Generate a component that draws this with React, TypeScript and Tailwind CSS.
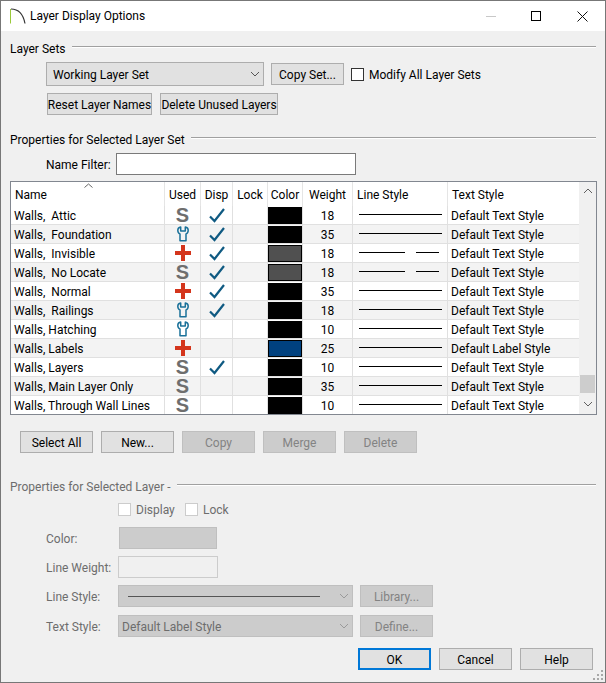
import React from 'react';

type Used = 'S' | 'W' | 'P';

interface LayerRow {
  name: string;
  used: Used;
  disp: boolean;
  color: 'black' | 'gray' | 'blue';
  weight: number;
  dashed?: boolean;
  textStyle?: string;
}

const rows: LayerRow[] = [
  { name: 'Walls,  Attic', used: 'S', disp: true, color: 'black', weight: 18 },
  { name: 'Walls,  Foundation', used: 'W', disp: true, color: 'black', weight: 35 },
  { name: 'Walls,  Invisible', used: 'P', disp: true, color: 'gray', weight: 18, dashed: true },
  { name: 'Walls,  No Locate', used: 'S', disp: true, color: 'gray', weight: 18, dashed: true },
  { name: 'Walls,  Normal', used: 'P', disp: true, color: 'black', weight: 35 },
  { name: 'Walls,  Railings', used: 'W', disp: true, color: 'black', weight: 18 },
  { name: 'Walls, Hatching', used: 'W', disp: false, color: 'black', weight: 10 },
  { name: 'Walls, Labels', used: 'P', disp: false, color: 'blue', weight: 25, textStyle: 'Default Label Style' },
  { name: 'Walls, Layers', used: 'S', disp: true, color: 'black', weight: 10 },
  { name: 'Walls, Main Layer Only', used: 'S', disp: false, color: 'black', weight: 35 },
  { name: 'Walls, Through Wall Lines', used: 'S', disp: false, color: 'black', weight: 10 },
];

const gridCols = 'grid grid-cols-[154px_36px_32px_35px_35px_50px_95px_131px]';

function Chevron({ dir = 'down', color = '#555' }: { dir?: 'down' | 'up'; color?: string }) {
  return (
    <svg width="10" height="6" viewBox="0 0 10 6" fill="none">
      <path d={dir === 'down' ? 'M1 1l4 4 4-4' : 'M1 5l4-4 4 4'} stroke={color} strokeWidth="1" />
    </svg>
  );
}

function GroupTitle({ label, disabled, className = '' }: { label: string; disabled?: boolean; className?: string }) {
  return (
    <div className={`flex items-center gap-[6px] h-[16px] ${className}`}>
      <span className={disabled ? 'text-[#6d6d6d]' : ''}>{label}</span>
      <div className="flex-1 h-[2px] -mt-[4px] border-t border-t-[#a0a0a0] border-b border-b-white" />
    </div>
  );
}

function Btn({ label, w, disabled, primary }: { label: string; w: string; disabled?: boolean; primary?: boolean }) {
  let cls = 'border border-[#adadad] bg-[#e1e1e1] text-black';
  if (disabled) cls = 'border border-[#bfbfbf] bg-[#cccccc] text-[#838383]';
  if (primary) cls = 'border-2 border-[#0078d7] bg-[#e1e1e1] text-black';
  return (
    <button className={`${w} h-[22px] pt-[2px] flex items-center justify-center whitespace-nowrap ${cls}`}>
      {label}
    </button>
  );
}

function Checkbox({ disabled }: { disabled?: boolean }) {
  return (
    <span className={`w-[13px] h-[13px] border bg-white ${disabled ? 'border-[#cccccc]' : 'border-[#333333]'}`} />
  );
}

function UsedIcon({ kind }: { kind: Used }) {
  if (kind === 'S') {
    return (
      <span className="text-[20px] font-bold leading-[18px] text-[#6e6e6e] font-['Liberation_Sans',sans-serif]">S</span>
    );
  }
  if (kind === 'P') {
    return (
      <svg width="16" height="16" viewBox="0 0 16 16">
        <path d="M6 0h4v6h6v4h-6v6h-4v-6h-6v-4h6z" fill="#d4351c" />
      </svg>
    );
  }
  return (
    <svg width="12" height="16" viewBox="0 0 12 16" fill="none">
      <path
        d="M3.700 1C1.800 1.300 .8 2.400 .8 4.300 .8 6.300 1.500 7.500 3 8V14.800H9V8C10.500 7.500 11.200 6.300 11.200 4.300 11.200 2.400 10.200 1.300 8.300 1V5H3.700Z"
        stroke="#1a7199"
        strokeWidth="1.500"
        strokeLinejoin="round"
      />
    </svg>
  );
}

function Check() {
  return (
    <svg width="16" height="15" viewBox="0 0 16 15" fill="none">
      <path d="M1 8.500l4.500 4.500L15 1" stroke="#0f5a82" strokeWidth="2.200" />
    </svg>
  );
}

function Swatch({ color }: { color: LayerRow['color'] }) {
  const cls =
    color === 'black'
      ? 'bg-black'
      : color === 'gray'
        ? 'bg-[#505050] border border-black'
        : 'bg-[#00417f] border border-black';
  return <div className={`w-[34px] h-[17px] ${cls}`} />;
}

function LineSample({ dashed }: { dashed?: boolean }) {
  if (dashed) {
    return (
      <div className="flex gap-[11px] ml-[6px] -mt-px">
        <div className="w-[46px] h-px bg-black" />
        <div className="w-[23px] h-px bg-black" />
      </div>
    );
  }
  return <div className="w-[83px] h-px bg-black ml-[6px] -mt-px" />;
}

const cell = 'border-r border-r-[#e0e0e0] flex items-center h-[18px]';

function Row({ row, index }: { row: LayerRow; index: number }) {
  return (
    <div className={`${gridCols} h-[19px] border-b border-b-[#e0e0e0] ${index % 2 ? 'bg-[#f3f3f3]' : 'bg-white'}`}>
      <div className={`${cell} pl-[3px] pt-[2px] whitespace-pre`}>{row.name}</div>
      <div className={`${cell} justify-center`}>
        <UsedIcon kind={row.used} />
      </div>
      <div className={`${cell} justify-center`}>{row.disp && <Check />}</div>
      <div className={cell} />
      <div className={cell}>
        <Swatch color={row.color} />
      </div>
      <div className={`${cell} pt-[2px] justify-center`}>{row.weight}</div>
      <div className={cell}>
        <LineSample dashed={row.dashed} />
      </div>
      <div className="flex items-center h-[18px] pl-[3px] pt-[2px]">{row.textStyle ?? 'Default Text Style'}</div>
    </div>
  );
}

export default function App() {
  return (
    <div className="w-[606px] h-[683px] relative border border-[#777777] bg-[#f0f0f0] text-[12px] leading-[16px] text-black font-['Roboto',sans-serif] overflow-hidden">
      {/* title bar */}
      <div className="h-[30px] bg-white flex items-center">
        <svg className="ml-[9px]" width="16" height="16" viewBox="0 0 16 16" fill="none">
          <path d="M1 1C7 1 13 5 15 15.500" stroke="#333" strokeWidth="1.200" />
          <path d="M.5 1V15.500" stroke="#9ac93a" strokeWidth="1" />
        </svg>
        <span className="ml-[4px]">Layer Display Options</span>
        <div className="ml-auto flex items-center mr-[17px]">
          <div className="w-[10px] h-px bg-[#c8c8c8] mr-[35px]" />
          <div className="w-[10px] h-[10px] border border-black mr-[36px]" />
          <svg width="11" height="11" viewBox="0 0 11 11" fill="none">
            <path d="M.5.5l10 10M10.500.5l-10 10" stroke="#111" strokeWidth="1" />
          </svg>
        </div>
      </div>

      <div className="pl-[9px] pr-[9px]">
        <GroupTitle label="Layer Sets" className="mt-[10px]" />

        <div className="flex items-center mt-[5px] ml-[36px] h-[24px]">
          <div className="w-[218px] h-[24px] border border-[#adadad] bg-[#e1e1e1] flex items-center justify-between pl-[6px] pr-[3px]">
            <span className="pt-[2px]">Working Layer Set</span>
            <Chevron />
          </div>
          <div className="ml-[7px]">
            <Btn label="Copy Set..." w="w-[73px]" />
          </div>
          <div className="ml-[7px] flex items-center gap-[5px]">
            <Checkbox />
            <span className="pt-[2px]">Modify All Layer Sets</span>
          </div>
        </div>

        <div className="flex gap-[8px] mt-[7px] ml-[37px]">
          <Btn label="Reset Layer Names" w="w-[105px]" />
          <Btn label="Delete Unused Layers" w="w-[118px]" />
        </div>

        <GroupTitle label="Properties for Selected Layer Set" className="mt-[17px]" />

        <div className="flex items-center mt-[5px] ml-[36px] h-[22px]">
          <span className="w-[70px] pt-[2px]">Name Filter:</span>
          <div className="w-[240px] h-[22px] border border-[#7a7a7a] bg-white" />
        </div>

        {/* layer table */}
        <div className="mt-[6px] w-[587px] h-[234px] border border-[#828790] bg-white flex overflow-hidden">
          <div className="w-[568px]">
            <div className={`${gridCols} h-[24px] relative`}>
              <svg className="absolute left-[73px] top-[1px]" width="9" height="5" viewBox="0 0 9 5" fill="none">
                <path d="M.5 4.500l4-3.500 4 3.500" stroke="#666" />
              </svg>
              {['Name', 'Used', 'Disp', 'Lock', 'Color', 'Weight', 'Line Style', 'Text Style'].map((h, i) => (
                <div
                  key={h}
                  className={`flex items-end pb-[3px] ${i < 7 ? 'border-r border-r-[#e5e5e5]' : ''} ${
                    i === 0 || i >= 6 ? 'pl-[4px]' : 'justify-center'
                  }`}
                >
                  {h}
                </div>
              ))}
            </div>
            {rows.map((row, i) => (
              <Row key={row.name} row={row} index={i} />
            ))}
          </div>
          {/* scrollbar */}
          <div className="flex-1 bg-[#f0f0f0] flex flex-col items-center relative">
            <div className="h-[17px] flex items-center justify-center pt-px">
              <Chevron dir="up" color="#606060" />
            </div>
            <div className="w-[15px] h-[18px] bg-[#cdcdcd] mt-[176px]" />
            <div className="flex-1 flex items-center justify-center">
              <Chevron color="#606060" />
            </div>
          </div>
        </div>

        <div className="flex gap-[8px] mt-[16px] ml-[10px]">
          <Btn label="Select All" w="w-[73px]" />
          <Btn label="New..." w="w-[73px]" />
          <Btn label="Copy" w="w-[73px]" disabled />
          <Btn label="Merge" w="w-[73px]" disabled />
          <Btn label="Delete" w="w-[73px]" disabled />
        </div>

        {/* disabled properties */}
        <GroupTitle label="Properties for Selected Layer -" disabled className="mt-[26px]" />

        <div className="flex items-center mt-[6px] ml-[108px] h-[16px] text-[#6d6d6d]">
          <Checkbox disabled />
          <span className="ml-[5px] w-[49px] pt-[2px]">Display</span>
          <Checkbox disabled />
          <span className="ml-[5px] pt-[2px]">Lock</span>
        </div>

        <div className="ml-[36px] mt-[10px] flex flex-col text-[#6d6d6d]">
          <div className="flex items-center h-[22px]">
            <span className="w-[73px] pt-[2px]">Color:</span>
            <div className="w-[98px] h-[22px] bg-[#cccccc] border border-[#bfbfbf]" />
          </div>
          <div className="flex items-center h-[22px] mt-[7px]">
            <span className="w-[72px] pt-[2px] whitespace-nowrap">Line Weight:</span>
            <div className="w-[100px] h-[22px] bg-[#f0f0f0] border border-[#cccccc]" />
          </div>
          <div className="flex items-center h-[22px] mt-[7px]">
            <span className="w-[72px] pt-[2px]">Line Style:</span>
            <div className="w-[235px] h-[22px] bg-[#cccccc] border border-[#bfbfbf] flex items-center justify-between pr-[3px]">
              <div className="w-[192px] h-px bg-[#555555] ml-[9px]" />
              <Chevron color="#9a9a9a" />
            </div>
            <div className="ml-[7px]">
              <Btn label="Library..." w="w-[73px]" disabled />
            </div>
          </div>
          <div className="flex items-center h-[22px] mt-[8px]">
            <span className="w-[72px] pt-[2px]">Text Style:</span>
            <div className="w-[235px] h-[22px] bg-[#cccccc] border border-[#bfbfbf] flex items-center justify-between pl-[3px] pr-[3px]">
              <span className="pt-[2px]">Default Label Style</span>
              <Chevron color="#9a9a9a" />
            </div>
            <div className="ml-[7px]">
              <Btn label="Define..." w="w-[73px]" disabled />
            </div>
          </div>
        </div>

        <div className="flex justify-end gap-[8px] mt-[11px] mr-[3px]">
          <Btn label="OK" w="w-[73px]" primary />
          <Btn label="Cancel" w="w-[73px]" />
          <Btn label="Help" w="w-[73px]" />
        </div>
      </div>

      {/* size grip */}
      <svg className="absolute right-[1px] bottom-[1px]" width="11" height="11" viewBox="0 0 11 11" fill="#a8a8a8">
        <rect x="8" y="0" width="2" height="2" />
        <rect x="4" y="4" width="2" height="2" />
        <rect x="8" y="4" width="2" height="2" />
        <rect x="0" y="8" width="2" height="2" />
        <rect x="4" y="8" width="2" height="2" />
        <rect x="8" y="8" width="2" height="2" />
      </svg>
    </div>
  );
}
